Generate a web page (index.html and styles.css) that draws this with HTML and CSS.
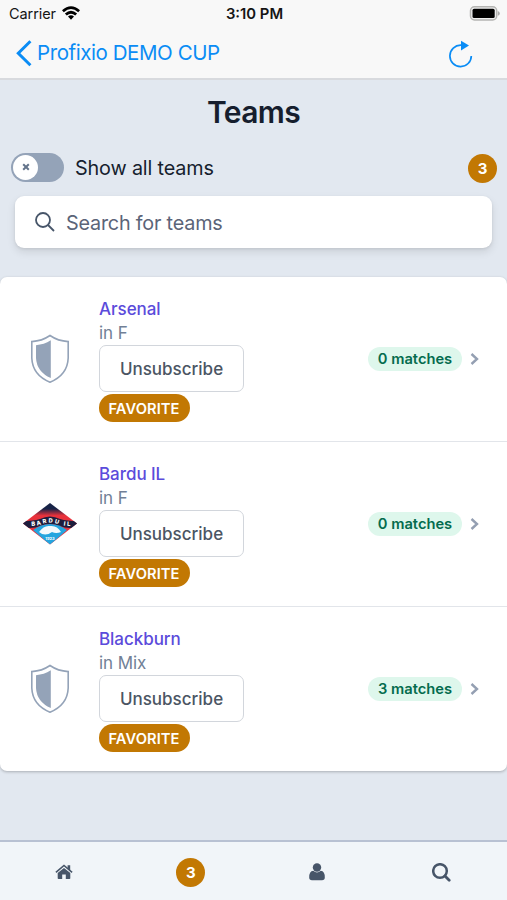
FILE: index.html
```html
<!DOCTYPE html>
<html lang="en">
<head>
<meta charset="utf-8">
<title>Teams</title>
<link rel="stylesheet" href="styles.css">
</head>
<body>
<div class="app">
  <header class="top">
    <div class="status">
      <div class="carrier"><span>Carrier</span>
        <svg class="wifi" width="18" height="14" viewBox="0 0 18 14"><path d="M0 4.3Q9-3.8 18 4.3L16.2 6.3Q9-.3 1.8 6.3ZM2.9 7.4Q9 2.1 15.1 7.4L13.2 9.5Q9 5.9 4.8 9.5ZM6 10.5Q9 8.2 12 10.5L9 13.7Z"/></svg>
      </div>
      <div class="clock">3:10 PM</div>
      <svg class="battery" width="31" height="15" viewBox="0 0 31 15"><rect x="1.5" y=".8" width="26.2" height="13.2" rx="4" fill="#f0f0f0" stroke="#b4b4b2" stroke-width="1.5"/><rect x="3.5" y="2.8" width="22.2" height="9.2" rx="1.6"/><path d="M28.8 5Q30.8 5.6 30.8 7.4Q30.8 9.2 28.8 9.8Z" fill="#aaa"/></svg>
    </div>
    <nav class="nav">
      <a class="back"><svg width="16" height="27" viewBox="0 0 16 27"><path d="M14.4 1.3L2.3 13.3L14.4 25.3" fill="none" stroke="#0a8cf5" stroke-width="3"/></svg><span>Profixio DEMO CUP</span></a>
      <svg class="reload" width="24" height="28" viewBox="0 0 24 28"><path d="M22.3 15.9A10.7 10.7 0 1 1 12 5.2" fill="none" stroke="#0a8cf5" stroke-width="1.7"/><path d="M12 .7L20 5.5L12 10.5Z" fill="#0a8cf5"/></svg>
    </nav>
  </header>
  <main class="main">
    <h1>Teams</h1>
    <div class="filter">
      <span class="switch"><span class="knob"><svg width="8" height="8" viewBox="0 0 8 8"><path d="M1.2 1.2L6.8 6.8M6.8 1.2L1.2 6.8" stroke="#64748b" stroke-width="2"/></svg></span></span>
      <span class="filter-label">Show all teams</span>
      <span class="count">3</span>
    </div>
    <div class="search">
      <svg width="20" height="20" viewBox="0 0 20 20" fill="none" stroke="#475569" stroke-width="1.8"><circle cx="8" cy="8" r="7"/><path d="M13 13L19 19"/></svg>
      <span>Search for teams</span>
    </div>
    <ul class="teams">
      <li class="team">
        <div class="crest"><svg width="40" height="50" viewBox="0 0 40 50"><path d="M20 1.5Q12 7 1.8 7.6V24Q2.5 41 20 48.2Q37.5 41 38.2 24V7.6Q28 7 20 1.5Z" fill="#fff" stroke="#94a3b8" stroke-width="1.6"/><path d="M20.8 6.3Q14 10.6 6 11.2V24Q6.8 38 20.8 44Z" fill="#94a3b8"/></svg></div>
        <div class="info"><a class="name">Arsenal</a><div class="group">in F</div><button class="unsub">Unsubscribe</button><span class="fav">FAVORITE</span></div>
        <span class="matches">0 matches</span>
        <svg class="chev" width="9" height="12" viewBox="0 0 9 12"><path d="M1.5 1L7 6L1.5 11"/></svg>
      </li>
      <li class="team">
        <div class="crest logo"><svg width="54" height="42" viewBox="0 0 54 42"><defs><clipPath id="lozenge"><path d="M27 0L54 20.5L27 41.5L0 20.5Z"/></clipPath><linearGradient id="sky" x1="0" y1="0" x2="0" y2="1"><stop offset="0.14" stop-color="#172347"/><stop offset="0.3" stop-color="#e8323c"/></linearGradient></defs><g clip-path="url(#lozenge)"><path fill="url(#sky)" d="M0 0H54V42H0Z"/><path d="M0 18Q10 18 17 16Q27 11 37 16Q44 18 54 18V24.5Q43 26 37 23Q27 19 17 23Q11 26 0 24.5Z" fill="#1d1d3d"/><path d="M0 6L20 0L0 21ZM54 6L34 0L54 21Z" fill="#172347" opacity=".5"/><path d="M10 27Q18 21 27 21Q36 21 44 27L27 42Z" fill="#25a5df"/><path d="M16 29Q21 22 27 23Q34 22 38 29Q33 31 29 29Q22 34 16 29Z" fill="#f4f9fc"/></g><path id="crest-arc" d="M6 23Q13 23 18 21.3Q27 18 36 21.3Q41 23 49 23" fill="none"/><text class="logo-name"><textPath href="#crest-arc" textLength="40" startOffset="2">BARDU IL</textPath></text><text class="logo-year" x="27" y="37" text-anchor="middle">1923</text></svg></div>
        <div class="info"><a class="name">Bardu IL</a><div class="group">in F</div><button class="unsub">Unsubscribe</button><span class="fav">FAVORITE</span></div>
        <span class="matches">0 matches</span>
        <svg class="chev" width="9" height="12" viewBox="0 0 9 12"><path d="M1.5 1L7 6L1.5 11"/></svg>
      </li>
      <li class="team">
        <div class="crest"><svg width="40" height="50" viewBox="0 0 40 50"><path d="M20 1.5Q12 7 1.8 7.6V24Q2.5 41 20 48.2Q37.5 41 38.2 24V7.6Q28 7 20 1.5Z" fill="#fff" stroke="#94a3b8" stroke-width="1.6"/><path d="M20.8 6.3Q14 10.6 6 11.2V24Q6.8 38 20.8 44Z" fill="#94a3b8"/></svg></div>
        <div class="info"><a class="name">Blackburn</a><div class="group">in Mix</div><button class="unsub">Unsubscribe</button><span class="fav">FAVORITE</span></div>
        <span class="matches">3 matches</span>
        <svg class="chev" width="9" height="12" viewBox="0 0 9 12"><path d="M1.5 1L7 6L1.5 11"/></svg>
      </li>
    </ul>
  </main>
  <footer class="tabs">
    <a><svg width="18" height="16" viewBox="0 0 18 16" fill="#475569"><path d="M9 4L15.3 9V14.2Q15.3 15 14.5 15H10.8V10.5H7.2V15H3.5Q2.7 15 2.7 14.2V9Z"/><path d="M.9 8.3L9 1.5L17.1 8.3" fill="none" stroke="#475569" stroke-width="1.6"/><path d="M12.6 1.2H15.2V6.8L12.6 4.5Z"/></svg></a>
    <a><span class="count">3</span></a>
    <a><svg width="16" height="18" viewBox="0 0 16 18" fill="#475569"><circle cx="8" cy="4.5" r="4.2"/><path d="M4.3 7.7Q8 11.2 11.7 7.7Q16 8.2 15.8 14.5Q15.8 17.3 13 17.3H3Q.2 17.3 .2 14.5Q0 8.2 4.3 7.7Z"/></svg></a>
    <a><svg width="19" height="19" viewBox="0 0 19 19" fill="none" stroke="#475569"><circle cx="8" cy="8" r="6.8" stroke-width="2.5"/><path d="M13 13L17.2 17.2" stroke-width="2.8" stroke-linecap="round"/></svg></a>
  </footer>
</div>
</body>
</html>
```
FILE: styles.css
```css
* { box-sizing: border-box; }
body { margin: 0; font-family: Inter, sans-serif; background: #e2e8f0; color: #161e2e; }
.app { width: 507px; height: 900px; display: flex; flex-direction: column; overflow: hidden; }
svg { display: block; flex: none; }
.top { height: 80px; flex: none; background: #f8f8f8; border-bottom: 2px solid #d8dade; }
.status { height: 28px; display: grid; grid-template-columns: 1fr auto 1fr; align-items: center; padding: 0 7px 0 9px; color: #151515; }
.carrier { display: flex; align-items: center; gap: 6px; font-size: 14.5px; letter-spacing: -.08px; line-height: 18px; }
.wifi { margin-top: -2px; }
.clock { font-size: 14.8px; font-weight: 600; line-height: 18px; }
.battery { justify-self: end; margin-top: -2px; }
.nav { height: 50px; display: flex; align-items: center; justify-content: space-between; padding: 0 34px 0 16px; }
.back { display: flex; align-items: center; gap: 5px; font-size: 20.5px; letter-spacing: -.42px; color: #0a8cf5; }
.back span { padding-bottom: 2px; }
.reload { margin-top: 2px; }
.main { flex: 1; }
h1 { margin: 0; padding-top: 13px; font-size: 30px; line-height: 38px; font-weight: 600; letter-spacing: -.6px; text-align: center; }
.filter { display: flex; align-items: center; height: 30px; margin: 21px 10px 0 11px; }
.switch { width: 53px; height: 29px; border-radius: 15px; background: #94a3b8; padding: 2px; }
.knob { width: 25px; height: 25px; border-radius: 50%; background: #fff; display: flex; align-items: center; justify-content: center; }
.filter-label { margin-left: 11px; padding-top: 1px; font-size: 19.8px; letter-spacing: -.15px; flex: 1; }
.count { width: 29px; height: 29px; border-radius: 50%; background: #c27803; color: #fff; font-size: 15px; font-weight: 700; display: flex; align-items: center; justify-content: center; }
.filter .count { margin-top: 3px; }
.search { margin: 14px 15px 0; height: 52px; background: #fff; border-radius: 9px; box-shadow: 0 4px 8px rgba(0,0,0,.1), 0 1px 3px rgba(0,0,0,.08); display: flex; align-items: center; gap: 11px; padding: 0 20px; font-size: 19.8px; letter-spacing: -.2px; color: #5b6478; }
.search span { padding-top: 1px; }
.teams { list-style: none; margin: 29px 0 0; padding: 0; background: #fff; border-radius: 7px; box-shadow: 0 1px 3px rgba(0,0,0,.25); }
.team { height: 165px; display: flex; align-items: center; padding: 0 28px 0 22px; border-bottom: 1px solid #e2e5ea; }
.team:last-child { height: 164px; border: 0; }
.crest { width: 55px; display: flex; justify-content: center; margin-right: 22px; }
.info { width: 145px; display: flex; flex-direction: column; align-items: flex-start; }
.name { font-size: 17px; line-height: 24px; font-weight: 500; letter-spacing: -.05px; color: #5b4bdb; }
.group { font-size: 17px; line-height: 24px; letter-spacing: -.1px; color: #718096; }
.unsub { width: 145px; height: 47px; border: 1px solid #d2d6dc; border-radius: 7px; background: #fff; padding: 1px 0 0; font: 500 17px Inter, sans-serif; color: #4b5563; }
.fav { margin-top: 2px; width: 91px; height: 28px; border-radius: 14px; background: #c27803; color: #fff; font-size: 14.7px; font-weight: 600; letter-spacing: .08px; line-height: 18px; padding: 2px 1px 0 0; display: flex; align-items: center; justify-content: center; }
.matches { margin-left: auto; width: 94px; height: 24px; border-radius: 12px; background: #def7ec; color: #046c4e; font-size: 14.7px; font-weight: 600; line-height: 20px; display: flex; align-items: center; justify-content: center; padding-bottom: 1px; }
.chev { margin-left: 8px; fill: none; stroke: #949fb2; stroke-width: 2.4; }
.logo-name { font-size: 5.8px; font-weight: 800; fill: #fff; }
.logo-year { font-size: 4px; font-weight: 700; fill: #fff; }
.tabs { height: 60px; flex: none; border-top: 2px solid #b8c1d3; background: #f1f5f9; display: grid; grid-template-columns: repeat(4, 1fr); align-items: center; padding: 2px 2px 0 0; }
.tabs a { display: flex; justify-content: center; }
.tabs a:first-child svg { margin-left: 2px; }
.tabs a:nth-child(2) .count { margin-left: 3px; }
.tabs a:nth-child(3) svg { margin-left: 2px; }
```
